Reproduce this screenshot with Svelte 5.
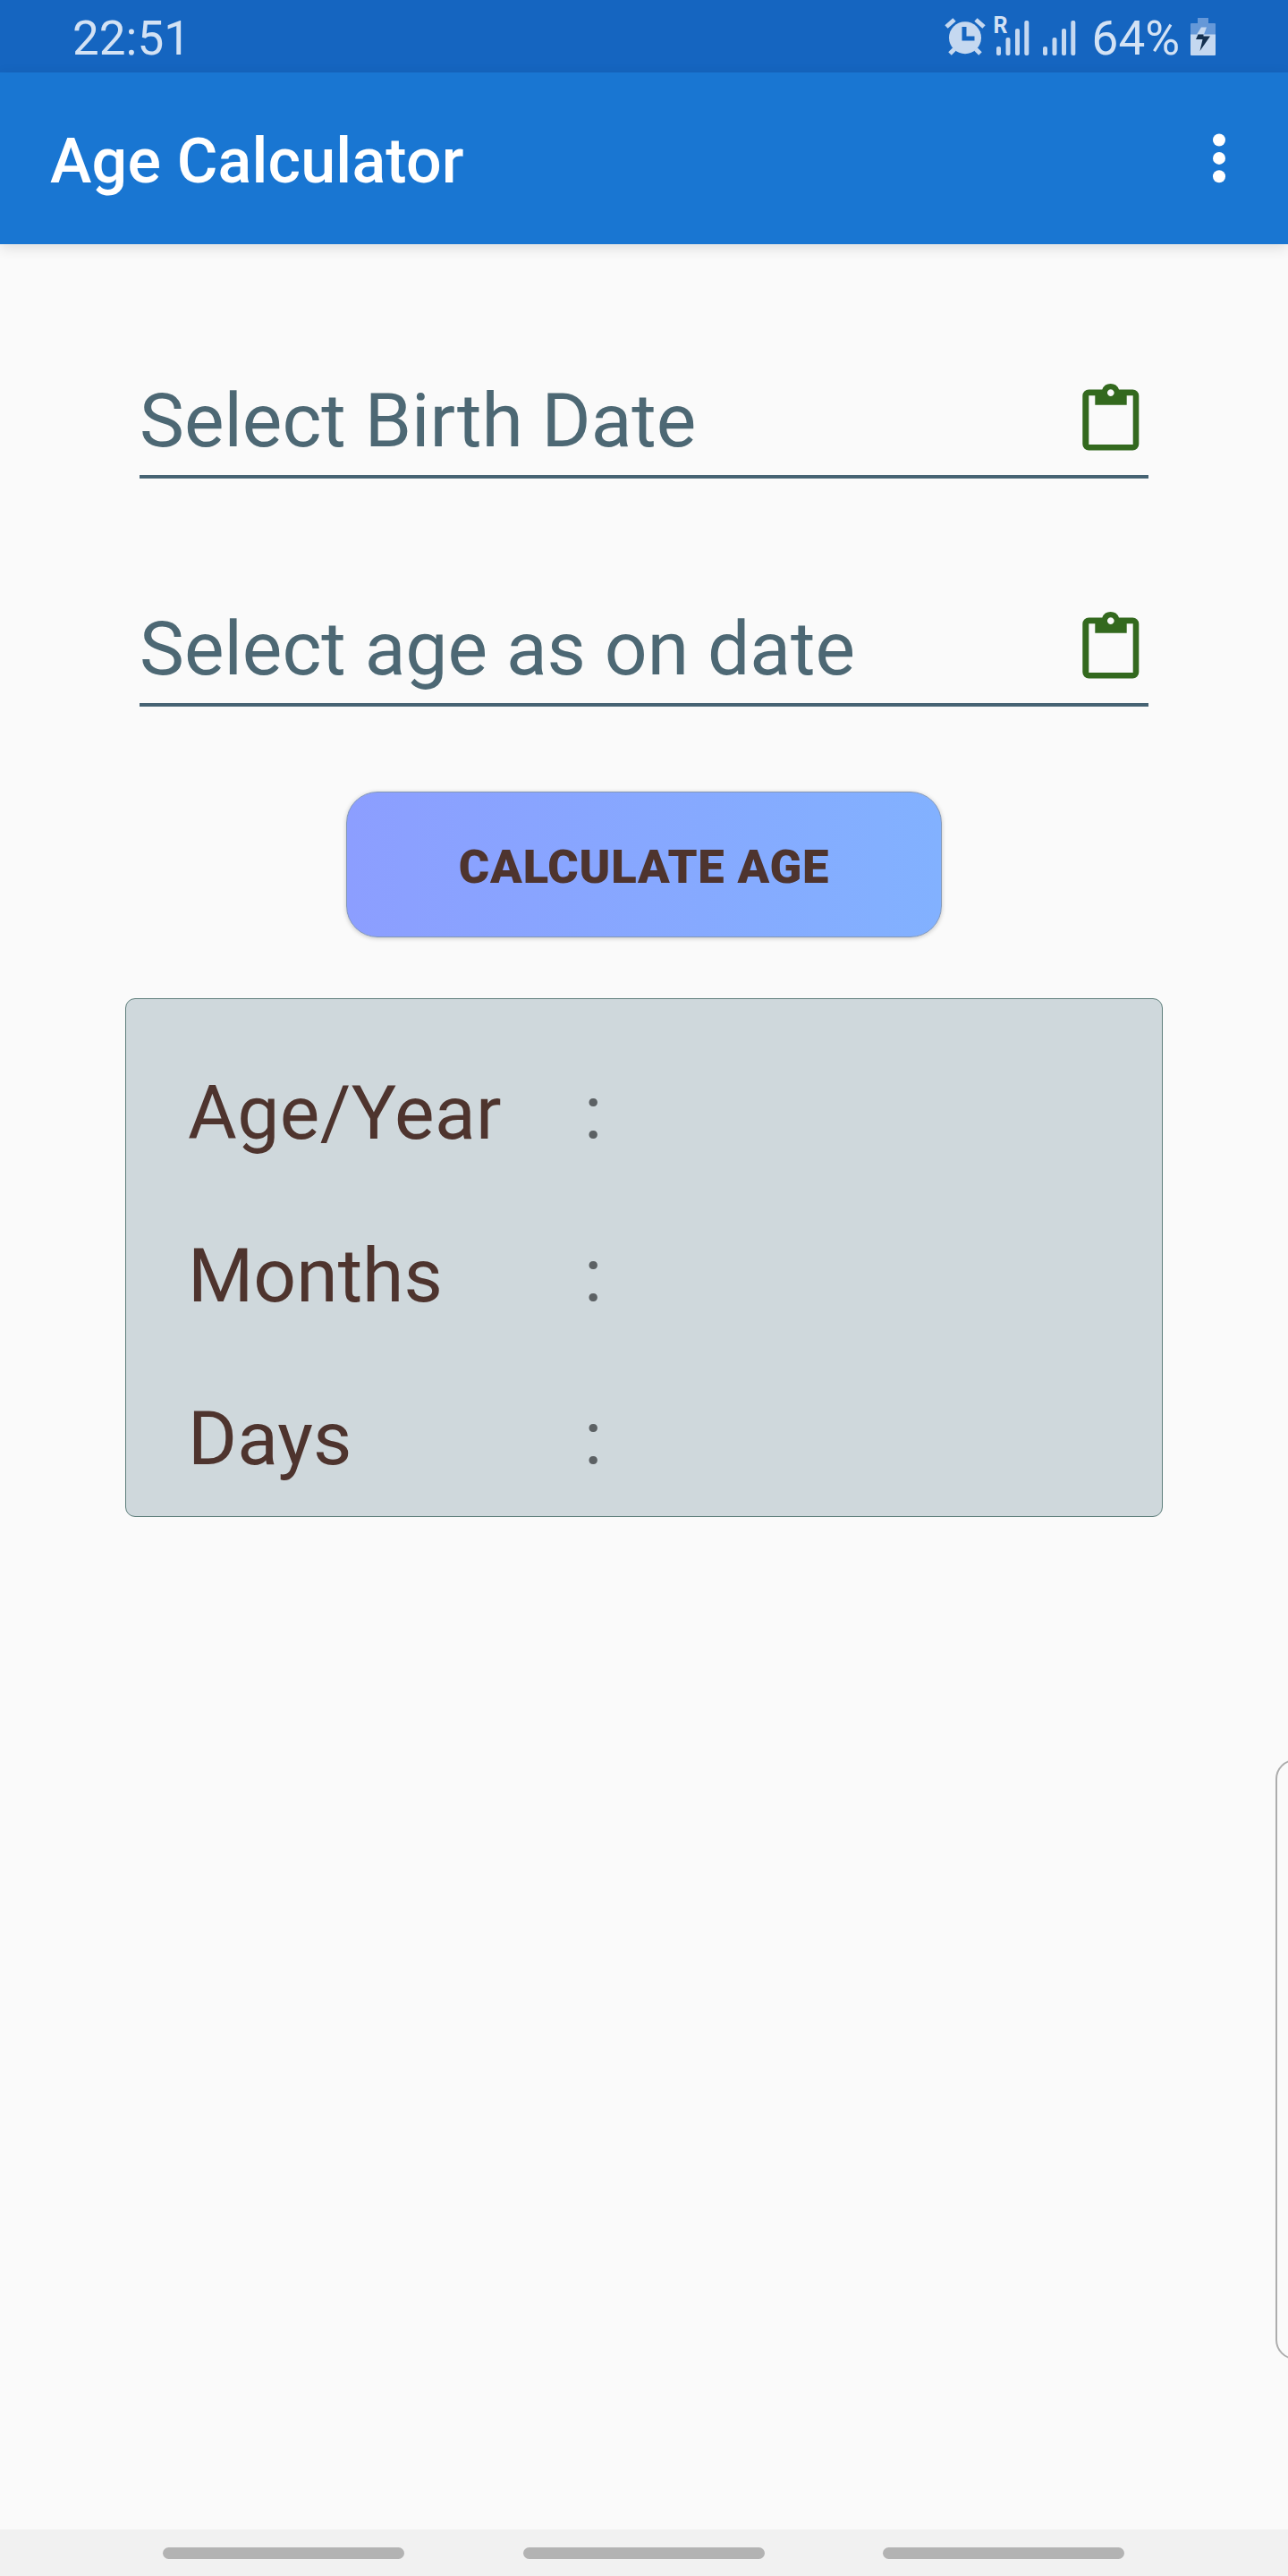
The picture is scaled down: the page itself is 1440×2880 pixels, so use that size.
<script>
  const fields = ['Select Birth Date', 'Select age as on date'];
  const results = ['Age/Year', 'Months', 'Days'];
</script>

<div class="screen">
  <header class="status">
    <span class="clock">22:51</span>
    <div class="indicators">
      <svg class="alarm" width="46" height="44" viewBox="0 0 46 44">
        <g fill="none" stroke="#c5d8f0" stroke-width="5">
          <path d="M2 11 11 3M35 3l9 8" />
          <path d="M11 36l-5 5M35 36l5 5" />
        </g>
        <circle cx="23" cy="23.2" r="18" fill="#c5d8f0" />
        <path d="M20.5 12v13H32" transform="translate(1.5 -1)" fill="none" stroke="#1565c0" stroke-width="5" />
      </svg>
      <svg class="roaming" width="41" height="54" viewBox="-2 -10 41 54">
        <text x="-1.5" y="18" class="r">R</text>
        <g fill="#c5d8f0">
          <rect x="2" y="33" width="5" height="10" rx="2" />
          <rect x="12.5" y="23" width="5" height="20" rx="2" />
          <rect x="23" y="13" width="5" height="30" rx="2" />
          <rect x="33.3" y="4" width="5" height="39" rx="2" />
        </g>
      </svg>
      <svg class="signal" width="37" height="44" viewBox="0 0 37 44">
        <g fill="#c5d8f0">
          <rect x="0" y="33" width="5" height="10" rx="2" />
          <rect x="10.5" y="23" width="5" height="20" rx="2" />
          <rect x="21" y="13" width="5" height="30" rx="2" />
          <rect x="31.3" y="4" width="5" height="39" rx="2" />
        </g>
      </svg>
      <span class="percent">64%</span>
      <svg class="battery" width="28" height="44" viewBox="0 0 28 44">
        <path d="M8 1h12v6h7q1 0 1 1v12H0V8q0-1 1-1h7z" fill="#6598d8" />
        <path d="M0 19.5h28V42q0 1-1 1H1q-1 0-1-1z" fill="#c5d8f0" />
        <path d="M12 11.5h6l-3 8H7z" fill="#c5d8f0" />
        <path d="M8.5 19.5h6v2H22L10.5 38l3-13H6z" fill="#15304f" />
      </svg>
    </div>
  </header>

  <div class="appbar">
    <h1>Age Calculator</h1>
    <svg width="14" height="56" viewBox="0 0 14 56" fill="#fff">
      <circle cx="7" cy="7.5" r="7" />
      <circle cx="7" cy="27.9" r="7" />
      <circle cx="7" cy="48.3" r="7" />
    </svg>
  </div>

  <main>
    {#each fields as label}
      <div class="field">
        <span>{label}</span>
        <svg width="64" height="76" viewBox="0 0 64 76">
          <path
            fill="#33691e"
            fill-rule="evenodd"
            d="M7 7.5H22.3A10 10 0 0 1 41 7.5H56.3a7 7 0 0 1 7 7V68.5a7 7 0 0 1-7 7H7.3a7 7 0 0 1-7-7V14.5a7 7 0 0 1 7-7zM7.3 14.3V69H56.7V14.3H49.7V24.8H14.3V14.3zM31.8 7.3a3.8 3.8 0 1 0 .01 0z"
          />
        </svg>
      </div>
    {/each}

    <button>CALCULATE AGE</button>

    <section class="card">
      {#each results as name}
        <div class="row">
          <span class="name">{name}</span>
          <span class="colon">:</span>
        </div>
      {/each}
    </section>
  </main>

  <div class="edge"></div>

  <nav>
    <i></i><i></i><i></i>
  </nav>
</div>

<style>
  :global(body) {
    background: #fafafa;
  }

  .screen {
    position: relative;
    display: flex;
    flex-direction: column;
    width: 1440px;
    height: 2880px;
    overflow: hidden;
    background: #fafafa;
    font-family: Roboto, sans-serif;
  }

  .status {
    display: flex;
    justify-content: space-between;
    align-items: center;
    box-sizing: border-box;
    height: 81px;
    padding: 4px 81px 0 81px;
    background: #1565c0;
    color: #d3e2f4;
    font-size: 53px;
    line-height: 60px;
  }

  .indicators {
    display: flex;
    align-items: center;
  }

  .indicators svg {
    display: block;
    margin-top: -3px;
  }

  .indicators .roaming {
    margin: -13px 0 0 8px;
  }

  .r {
    font: 700 25px Roboto, sans-serif;
    fill: #d3e2f4;
  }

  .signal {
    margin-left: 15px;
  }

  .percent {
    margin-left: 18px;
  }

  .battery {
    margin-left: 12px;
  }

  .appbar {
    display: flex;
    justify-content: space-between;
    align-items: center;
    box-sizing: border-box;
    height: 192px;
    padding: 0 70px 0 56px;
    background: #1976d2;
    box-shadow: 0 4px 14px rgba(0, 0, 0, 0.12);
  }

  h1 {
    margin: 0;
    padding-top: 6px;
    color: #fff;
    font-size: 70px;
    font-weight: 500;
    letter-spacing: 0.18px;
    line-height: 82px;
  }

  main {
    flex: 1;
    display: flex;
    flex-direction: column;
    align-items: center;
    padding-top: 135px;
  }

  .field {
    display: flex;
    justify-content: space-between;
    align-items: center;
    box-sizing: border-box;
    width: 1128px;
    height: 127px;
    margin-bottom: 128px;
    padding-right: 10px;
    border-bottom: 4px solid #466373;
    color: #4d6874;
    font-size: 84px;
    line-height: 100px;
  }

  .field span {
    padding-top: 2px;
  }

  .field svg {
    margin-top: -7px;
  }

  button {
    box-sizing: border-box;
    width: 666px;
    height: 163px;
    margin: -33px 0 68px;
    padding: 4px 0 0;
    border: 1px solid #8398b8;
    border-radius: 35px;
    background: linear-gradient(90deg, #8c9eff, #82b1ff);
    box-shadow: 0 1px 5px rgba(0, 0, 0, 0.22);
    color: #4e342e;
    font: 900 52.5px/62px Roboto, sans-serif;
    letter-spacing: 0.8px;
  }

  .card {
    display: flex;
    flex-direction: column;
    gap: 22px;
    box-sizing: border-box;
    width: 1160px;
    height: 580px;
    padding: 48px 0 0 69px;
    border: 1px solid #5f7f7c;
    border-radius: 11px;
    background: #cfd8dc;
  }

  .row {
    display: flex;
    align-items: center;
    height: 160px;
    font-size: 84px;
    line-height: 100px;
  }

  .name {
    width: 443px;
    color: #4e342e;
  }

  .row:first-child .name {
    letter-spacing: 0.4px;
  }

  .colon {
    color: #5c6164;
  }

  .edge {
    position: absolute;
    top: 1967px;
    right: -30px;
    box-sizing: border-box;
    width: 44px;
    height: 671px;
    border: 2px solid #adadad;
    border-radius: 22px;
  }

  nav {
    display: flex;
    gap: 132.5px;
    box-sizing: border-box;
    height: 52px;
    padding: 20px 0 0 182px;
    background: #f1f1f1;
  }

  nav i {
    width: 270px;
    height: 13px;
    border-radius: 7px;
    background: #b3b3b3;
  }
</style>
